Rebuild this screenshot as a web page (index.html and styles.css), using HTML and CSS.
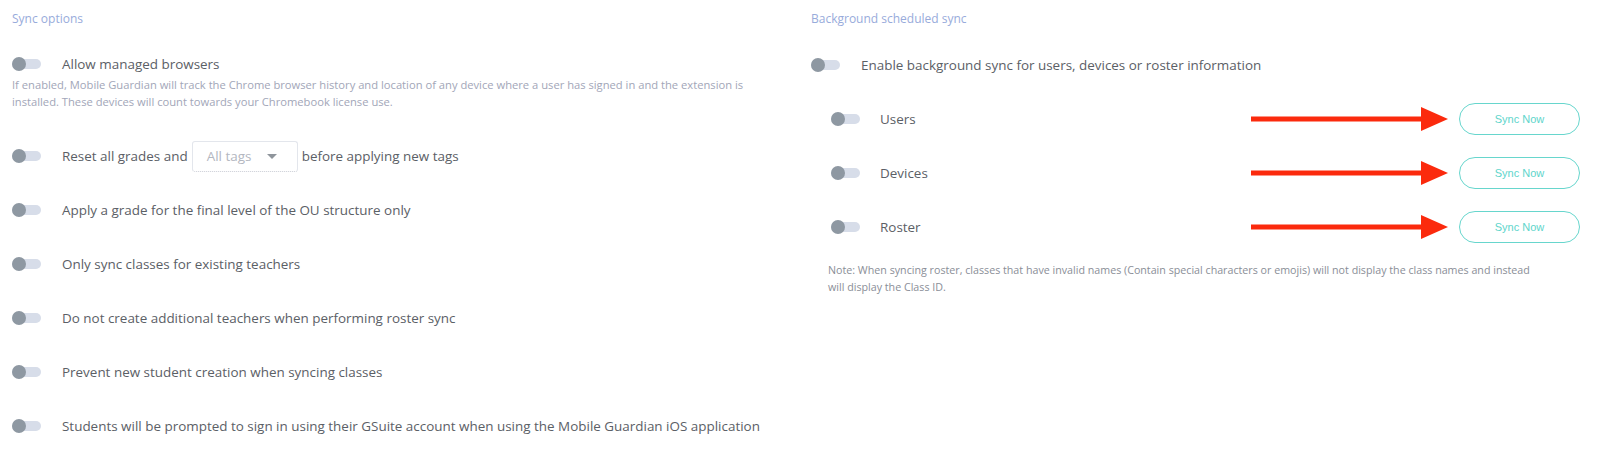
FILE: index.html
```html
<!DOCTYPE html>
<html>
<head>
<meta charset="utf-8">
<link rel="stylesheet" href="styles.css">
</head>
<body>
<div class="page">
  <section class="col left">
    <h3 class="title">Sync options</h3>
    <div class="opt first">
      <div class="row"><span class="toggle"></span><span class="label">Allow managed browsers</span></div>
      <p class="help">If enabled, Mobile Guardian will track the Chrome browser history and location of any device where a user has signed in and the extension is installed. These devices will count towards your Chromebook license use.</p>
    </div>
    <div class="opt reset">
      <div class="row"><span class="toggle"></span><span class="label">Reset all grades and</span>
        <span class="select"><span class="sel-text">All tags</span><span class="caret"></span></span>
        <span class="label">before applying new tags</span></div>
    </div>
    <div class="opt"><div class="row"><span class="toggle"></span><span class="label">Apply a grade for the final level of the OU structure only</span></div></div>
    <div class="opt"><div class="row"><span class="toggle"></span><span class="label">Only sync classes for existing teachers</span></div></div>
    <div class="opt"><div class="row"><span class="toggle"></span><span class="label">Do not create additional teachers when performing roster sync</span></div></div>
    <div class="opt"><div class="row"><span class="toggle"></span><span class="label">Prevent new student creation when syncing classes</span></div></div>
    <div class="opt"><div class="row"><span class="toggle"></span><span class="label">Students will be prompted to sign in using their GSuite account when using the Mobile Guardian iOS application</span></div></div>
  </section>
  <section class="col right">
    <h3 class="title">Background scheduled sync</h3>
    <div class="opt first">
      <div class="row"><span class="toggle"></span><span class="label">Enable background sync for users, devices or roster information</span></div>
    </div>
    <div class="sub">
      <div class="subrow"><span class="toggle"></span><span class="label grow">Users</span>
        <svg class="arrow" width="197" height="26" viewBox="0 0 197 26"><rect x="0" y="10.5" width="172" height="5" fill="#fb2a0d"/><polygon points="170,1 197,13 170,25" fill="#fb2a0d"/></svg>
        <button class="sync">Sync Now</button></div>
      <div class="subrow"><span class="toggle"></span><span class="label grow">Devices</span>
        <svg class="arrow" width="197" height="26" viewBox="0 0 197 26"><rect x="0" y="10.5" width="172" height="5" fill="#fb2a0d"/><polygon points="170,1 197,13 170,25" fill="#fb2a0d"/></svg>
        <button class="sync">Sync Now</button></div>
      <div class="subrow"><span class="toggle"></span><span class="label grow">Roster</span>
        <svg class="arrow" width="197" height="26" viewBox="0 0 197 26"><rect x="0" y="10.5" width="172" height="5" fill="#fb2a0d"/><polygon points="170,1 197,13 170,25" fill="#fb2a0d"/></svg>
        <button class="sync">Sync Now</button></div>
      <p class="note">Note: When syncing roster, classes that have invalid names (Contain special characters or emojis) will not display the class names and instead will display the Class ID.</p>
    </div>
  </section>
</div>
</body>
</html>
```
FILE: styles.css
```css
* { box-sizing: border-box; }
html, body { margin: 0; padding: 0; background: #fff; }
body { font-family: "Open Sans", "Noto Sans", sans-serif; color: #5b6066; }
.page {
  display: grid;
  grid-template-columns: 1fr 1fr;
  column-gap: 30px;
  padding: 0 20px 0 12px;
  height: 452px;
  overflow: hidden;
}
.title {
  margin: 0;
  padding-top: 11px;
  font-size: 12px;
  line-height: 16px;
  font-weight: 400;
  color: #98abdb;
}
.opt { height: 54px; }
.opt.first { margin-top: 27px; height: 92px; }
.right .opt.first { margin-top: 28px; height: 54px; }
.row {
  display: flex;
  align-items: center;
  height: 20px;
}
.toggle {
  position: relative;
  width: 29px;
  height: 10px;
  border-radius: 5px;
  background: #d7dde9;
  flex: none;
  margin-right: 21px;
}
.toggle::before {
  content: "";
  position: absolute;
  left: 0;
  top: -2px;
  width: 14px;
  height: 14px;
  border-radius: 50%;
  background: #8e98a2;
}
.label {
  font-size: 13.45px;
  color: #5b6066;
  white-space: nowrap;
}
.help {
  margin: 2px 0 0;
  font-size: 11.2px;
  line-height: 17px;
  color: #a2a6b8;
  max-width: 745px;
}
.reset .row { height: 32px; margin-top: -6px; }
.reset { height: 60px; }
.select {
  display: inline-flex;
  align-items: center;
  justify-content: space-between;
  width: 106px;
  height: 31px;
  margin: 0 4px;
  padding: 0 20px 0 14px;
  border: 1px solid #e3e6ec;
  border-bottom: 1px dotted #c9ccd4;
  border-radius: 3px;
}
.sel-text { font-size: 13.45px; color: #b3b7bf; }
.caret {
  width: 0; height: 0;
  border-left: 5px solid transparent;
  border-right: 5px solid transparent;
  border-top: 5px solid #8f959c;
}
.sub { padding-left: 20px; }
.subrow {
  display: flex;
  align-items: center;
  height: 54px;
  margin-top: -16px;
  margin-bottom: 16px;
}
.subrow:first-child { margin-top: -17px; }
.subrow .toggle { margin-right: 20px; }
.grow { flex: 1; }
.arrow { flex: none; margin-right: 11px; }
.sync {
  width: 121px;
  height: 32px;
  border: 1px solid #67d6cd;
  border-radius: 16px;
  background: #fff;
  color: #5ed5cb;
  font-family: "Liberation Sans", sans-serif;
  font-size: 11px;
  font-weight: 300;
  padding: 0;
}
.note {
  margin: -8px 0 0 -3px;
  font-size: 10.7px;
  line-height: 17px;
  color: #8a8e97;
  max-width: 720px;
}
```
